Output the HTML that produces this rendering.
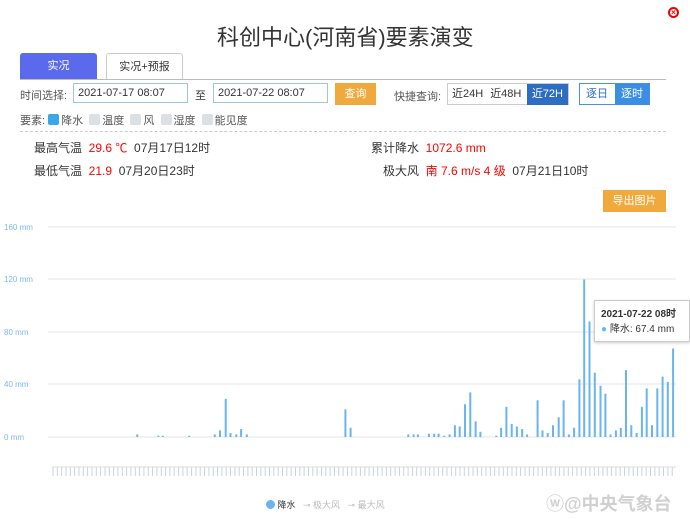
<!DOCTYPE html>
<html><head><meta charset="utf-8"><style>
*{margin:0;padding:0;box-sizing:border-box}
body{width:690px;height:519px;background:#fff;font-family:"Liberation Sans","Noto Sans CJK SC",sans-serif;position:relative;overflow:hidden;color:#333}
.a{position:absolute;white-space:nowrap}
.r{color:#f00}
.btn{position:absolute;border:1px solid #ccc;font-size:11px;text-align:center}
.cb{display:inline-block;width:11px;height:11px;background:#dde0e3;border-radius:2px;vertical-align:-1px;margin-right:2px}
</style></head><body>
<div class="a" style="left:217px;top:20px;font-size:22px;color:#333">科创中心(河南省)要素演变</div>
<div class="a" style="left:668px;top:7px;width:11px;height:11px;border:2px solid #e00;border-radius:50%;font-size:8px;line-height:7px;text-align:center;color:#e00;font-weight:bold">×</div>
<div class="a" style="left:20px;top:53px;width:77px;height:27px;background:#5b6aec;color:#fff;font-size:11px;text-align:center;line-height:27px;border-radius:3px 3px 0 0">实况</div>
<div class="a" style="left:106px;top:53px;width:77px;height:27px;border:1px solid #ccc;border-bottom:none;font-size:11px;text-align:center;line-height:26px;border-radius:3px 3px 0 0">实况+预报</div>
<div class="a" style="left:20px;top:79px;width:646px;height:1px;background:#bbb"></div>
<div class="a" style="left:20px;top:87px;font-size:11px;color:#555">时间选择:</div>
<div class="btn" style="left:73px;top:83px;width:115px;height:20px;line-height:19px;text-align:left;padding-left:4px;border-color:#9cc3e8">2021-07-17 08:07</div>
<div class="a" style="left:195px;top:87px;font-size:11px">至</div>
<div class="btn" style="left:213px;top:83px;width:115px;height:20px;line-height:19px;text-align:left;padding-left:4px;border-color:#9cc3e8">2021-07-22 08:07</div>
<div class="btn" style="left:335px;top:83px;width:41px;height:22px;line-height:21px;background:#f0a93c;border-color:#f0a93c;color:#fff">查询</div>
<div class="a" style="left:394px;top:88px;font-size:11px;color:#555">快捷查询:</div>
<div class="btn" style="left:447px;top:83px;width:122px;height:22px;line-height:21px;text-align:left"><span style="padding:0 4px">近24H</span><span style="padding:0 3px">近48H</span><span style="display:inline-block;background:#2e6dc4;color:#fff;padding:0 5px;float:right">近72H</span></div>
<div class="btn" style="left:579px;top:83px;width:71px;height:22px;line-height:21px;border-color:#4a90e2;text-align:left"><span style="padding:0 6px;color:#2e6dc4">逐日</span><span style="display:inline-block;background:#3a8ee6;color:#fff;padding:0 6px;float:right">逐时</span></div>
<div class="a" style="left:20px;top:112px;font-size:11px;color:#555">要素: <span class="cb" style="background:#3aa7e6"></span>降水 &nbsp;<span class="cb"></span>温度 &nbsp;<span class="cb"></span>风 &nbsp;<span class="cb"></span>湿度 &nbsp;<span class="cb"></span>能见度</div>
<div class="a" style="left:20px;top:131px;width:646px;border-top:1px dashed #ccc"></div>
<div class="a" style="left:34px;top:139px;font-size:12px">最高气温 &nbsp;<span class="r">29.6 ℃</span> &nbsp;07月17日12时</div>
<div class="a" style="left:34px;top:162px;font-size:12px">最低气温 &nbsp;<span class="r">21.9</span> &nbsp;07月20日23时</div>
<div class="a" style="left:371px;top:139px;font-size:12px">累计降水 &nbsp;<span class="r">1072.6 mm</span></div>
<div class="a" style="left:383px;top:162px;font-size:12px">极大风 &nbsp;<span class="r">南 7.6 m/s 4 级</span> &nbsp;07月21日10时</div>
<div class="btn" style="left:603px;top:190px;width:63px;height:22px;line-height:21px;background:#f0a93c;border-color:#f0a93c;color:#fff">导出图片</div>
<svg id="ch" class="a" style="left:0;top:0" width="690" height="519"></svg>
<div class="a" style="left:266px;top:498px;font-size:9px;color:#333"><span style="display:inline-block;width:9px;height:9px;border-radius:50%;background:#6ab4f2;vertical-align:-1px"></span> 降水 &nbsp;&nbsp;<span style="color:#bbb">⊸ 极大风 &nbsp;&nbsp;⊸ 最大风</span></div>
<div class="a" style="left:546px;top:490px;font-size:18px;color:#d0d0d0;font-weight:bold">ⓦ@中央气象台</div>
<div class="a" style="left:594px;top:300px;width:96px;height:42px;background:#fff;border:1px solid #ccc;box-shadow:0 1px 3px rgba(0,0,0,.2);font-size:10px;padding:4px 6px"><b style="font-weight:bold">2021-07-22 08时</b><br><span style="color:#6ab4f2">●</span> 降水: 67.4 mm</div>
<script>
var s='',base=437,k=1.3125;
[[160,227],[120,279],[80,332],[40,384],[0,437]].forEach(function(g){s+='<line x1="48" x2="676" y1="'+g[1]+'" y2="'+g[1]+'" stroke="#e6e6e6"/><text x="4" y="'+(g[1]+3)+'" font-size="8" fill="#7ab8ee" font-family="Liberation Sans">'+g[0]+' mm</text>';});
var b=[[312,2],[360,1],[370,1],[430,1],[488,2],[500,5],[513,29],[524,3],[537,2],[548,6],[561,2],[785,21],[797,7],[928,2],[940,2],[950,2],[975,2.5],[987,2.5],[997,2.5],[1010,1],[1022,2],[1034,9],[1045,8],[1057,25],[1069,34],[1081,12],[1092,4],[1128,1],[1139,7],[1151,23],[1163,10],[1175,8],[1187,6],[1198,2],[1222,28],[1233,5],[1245,3],[1257,9],[1270,15],[1281,28],[1293,2],[1305,7],[1317,44],[1328,120],[1340,88],[1352,49],[1365,39],[1376,33],[1388,2],[1400,5],[1411,7],[1423,51],[1435,9],[1447,3],[1459,23],[1470,37],[1482,9],[1494,37],[1506,46],[1518,42],[1530,67.4]];
b.forEach(function(v){var x=v[0]/2.273,h=v[1]*k;s+='<rect x="'+(x-1).toFixed(1)+'" y="'+(base-h).toFixed(1)+'" width="2" height="'+h.toFixed(1)+'" fill="#6ab4f2"/>';});
s+='<line x1="52" x2="676" y1="467" y2="467" stroke="#ddd"/>';
for(var x=53;x<676;x+=4.33)s+='<line x1="'+x.toFixed(1)+'" x2="'+x.toFixed(1)+'" y1="467" y2="476" stroke="#c8d4e0"/>';
document.getElementById('ch').innerHTML=s;
</script>
</body></html>
